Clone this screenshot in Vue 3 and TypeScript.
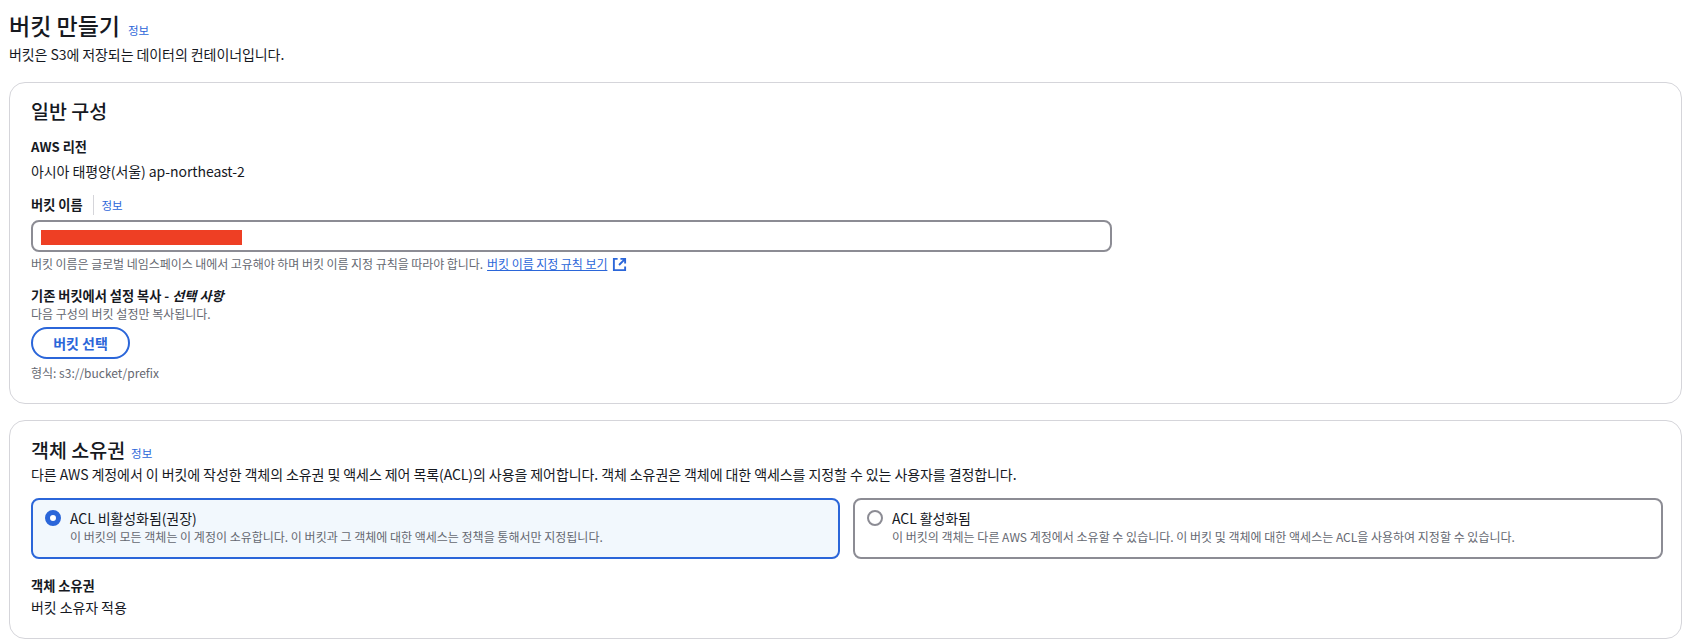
<script setup lang="ts">
const radios = [
  {
    title: 'ACL 비활성화됨(권장)',
    desc: '이 버킷의 모든 객체는 이 계정이 소유합니다. 이 버킷과 그 객체에 대한 액세스는 정책을 통해서만 지정됩니다.',
    active: true
  },
  {
    title: 'ACL 활성화됨',
    desc: '이 버킷의 객체는 다른 AWS 계정에서 소유할 수 있습니다. 이 버킷 및 객체에 대한 액세스는 ACL을 사용하여 지정할 수 있습니다.',
    active: false
  }
]
</script>

<template>
  <div class="page">
    <header class="pageHead">
      <div class="titleRow">
        <h1>버킷 만들기</h1>
        <a class="info">정보</a>
      </div>
      <p class="lead">버킷은 S3에 저장되는 데이터의 컨테이너입니다.</p>
    </header>

    <section class="card general">
      <h2>일반 구성</h2>
      <div class="label regionLabel">AWS 리전</div>
      <div class="value regionValue">아시아 태평양(서울) ap-northeast-2</div>

      <div class="label nameLabel">
        <span>버킷 이름</span>
        <a class="info divided">정보</a>
      </div>
      <div class="input"><span class="redact"></span></div>
      <div class="hint hintRow">
        <span>버킷 이름은 글로벌 네임스페이스 내에서 고유해야 하며 버킷 이름 지정 규칙을 따라야 합니다.</span>
        <a class="extLink">버킷 이름 지정 규칙 보기</a>
        <svg class="extIcon" viewBox="0 0 16 16" fill="none">
          <path d="M6 2H2v12h12v-4" />
          <path d="M9 2h5v5M14 2 7.5 8.5" />
        </svg>
      </div>

      <div class="label copyLabel">기존 버킷에서 설정 복사 - <em>선택 사항</em></div>
      <div class="hint copyHint">다음 구성의 버킷 설정만 복사됩니다.</div>
      <button class="pickBtn" type="button">버킷 선택</button>
      <div class="hint formatHint">형식: s3://bucket/prefix</div>
    </section>

    <section class="card ownership">
      <div class="cardTitle">
        <h2>객체 소유권</h2>
        <a class="info">정보</a>
      </div>
      <p class="value cardDesc">다른 AWS 계정에서 이 버킷에 작성한 객체의 소유권 및 액세스 제어 목록(ACL)의 사용을 제어합니다. 객체 소유권은 객체에 대한 액세스를 지정할 수 있는 사용자를 결정합니다.</p>

      <div class="radioGrid">
        <div v-for="r in radios" :key="r.title" class="radioCard" :class="{ active: r.active }">
          <span class="dot"></span>
          <div>
            <div class="value">{{ r.title }}</div>
            <div class="hint radioDesc">{{ r.desc }}</div>
          </div>
        </div>
      </div>

      <div class="label ownerLabel">객체 소유권</div>
      <div class="value ownerValue">버킷 소유자 적용</div>
    </section>
  </div>
</template>

<style>
html,
body {
  background: #fff;
}
</style>

<style scoped>
.page {
  --ink: #16191f;
  --muted: #656871;
  --blue: #2b66d9;
  box-sizing: border-box;
  width: 1684px;
  height: 640px;
  overflow: hidden;
  padding: 10px 2px 0 9px;
  color: var(--ink);
  font-family: "Noto Sans CJK KR", "Noto Sans", sans-serif;
  font-size: 14px;
  letter-spacing: -0.08px;
}

h1,
h2,
p {
  margin: 0;
}

.titleRow {
  display: flex;
  align-items: baseline;
  gap: 8px;
}

h1 {
  font-size: 23px;
  line-height: 30px;
  font-weight: 500;
  letter-spacing: 0;
}

h2 {
  font-size: 19.5px;
  line-height: 28px;
  font-weight: 500;
  letter-spacing: 0;
}

.info {
  color: var(--blue);
  font-size: 11.5px;
  line-height: 16px;
  letter-spacing: 0;
}

.lead {
  margin-top: 5px;
  line-height: 18px;
}

.card {
  box-sizing: border-box;
  border: 1px solid #d5d5da;
  border-radius: 16px;
  padding: 14px 19px 22px 21px;
}

.general {
  margin-top: 19px;
  height: 322px;
}

.ownership {
  margin-top: 16px;
  height: 219px;
  padding-top: 15px;
}

.label {
  font-size: 13.2px;
  font-weight: 700;
  line-height: 18px;
  letter-spacing: 0;
}

.value {
  line-height: 18px;
}

.hint {
  color: var(--muted);
  font-size: 12px;
  line-height: 16px;
  letter-spacing: 0;
}

.regionLabel {
  margin-top: 13px;
}

.regionValue {
  margin-top: 6px;
}

.nameLabel {
  margin-top: 16px;
  height: 18px;
  display: flex;
  align-items: center;
}

.divided {
  margin-left: 10px;
  padding-left: 8px;
  border-left: 1px solid #d5d5da;
  line-height: 20px;
  font-weight: 400;
}

.input {
  box-sizing: border-box;
  margin-top: 6px;
  width: 1081px;
  height: 32px;
  border: 2px solid #8c8c94;
  border-radius: 8px;
  padding: 8px 0 0 8px;
}

.redact {
  display: block;
  width: 201px;
  height: 15px;
  background: #ee3f24;
}

.hintRow {
  margin-top: 4px;
  display: flex;
  align-items: center;
  letter-spacing: -0.06px;
}

.extLink {
  margin-left: 4px;
  color: var(--blue);
  text-decoration: underline;
}

.extIcon {
  margin-left: 5px;
  width: 15px;
  height: 15px;
  stroke: var(--blue);
  stroke-width: 2;
}

.copyLabel {
  margin-top: 15px;
}

.copyLabel em {
  font-style: italic;
}

.copyHint {
  margin-top: 1px;
}

.pickBtn {
  display: block;
  box-sizing: border-box;
  margin-top: 5px;
  width: 99px;
  height: 32px;
  padding: 0;
  border: 2px solid var(--blue);
  border-radius: 16px;
  background: #fff;
  color: var(--blue);
  font: 700 14px/1 "Noto Sans CJK KR", sans-serif;
}

.formatHint {
  margin-top: 6px;
}

.cardTitle {
  display: flex;
  align-items: baseline;
  gap: 6px;
}

.cardDesc {
  margin-top: 1px;
}

.radioGrid {
  margin-top: 15px;
  display: grid;
  grid-template-columns: 809px 810px;
  gap: 13px;
}

.radioCard {
  box-sizing: border-box;
  height: 61px;
  display: flex;
  gap: 9px;
  padding: 9px 12px 0;
  border: 2px solid #8c8c94;
  border-radius: 8px;
}

.radioCard.active {
  border-color: var(--blue);
  background: #f2f8fd;
}

.radioDesc {
  margin-top: 2px;
}

.dot {
  box-sizing: border-box;
  flex: none;
  width: 16px;
  height: 16px;
  margin-top: 1px;
  border: 2px solid #8c8c94;
  border-radius: 50%;
  background: #fff;
}

.active .dot {
  border: 5px solid var(--blue);
}

.ownerLabel {
  margin-top: 18px;
}

.ownerValue {
  margin-top: 3px;
}
</style>
